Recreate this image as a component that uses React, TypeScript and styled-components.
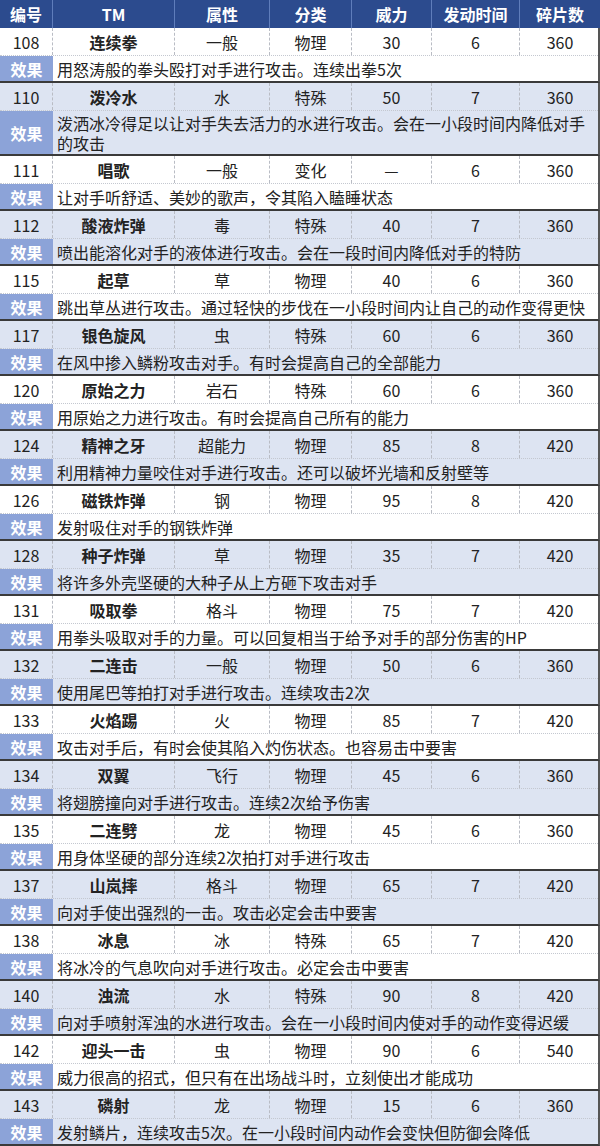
import React from "react"
import styled, { createGlobalStyle } from "styled-components";

const GlobalStyle = createGlobalStyle`
    html, body {
        margin: 0;
        padding: 0;
        background: #fff;
    }
    * {
        box-sizing: border-box;
    }
`

const FONT = `"Noto Sans CJK SC", "Noto Sans", sans-serif`
const COLUMNS = "53px 122px 95px 82px 80px 88px 80px"

const Table = styled.div`
    width: 600px;
    font-family: ${FONT};
    color: #1e1e1e;
`

const HeaderRow = styled.div`
    display: grid;
    grid-template-columns: ${COLUMNS};
    height: 28px;
    background: #2c4b8e;
`

const HeaderCell = styled.div`
    display: flex;
    align-items: center;
    justify-content: center;
    color: #fff;
    font-weight: 700;
    font-size: 16px;
    border-right: 1px solid #5f7dbb;
    &:last-child {
        border-right: none;
    }
`

const Group = styled.div<{ $shade: boolean }>`
    background: ${p => p.$shade ? "#dde4f2" : "#fff"};
    border-bottom: 2px solid #3a3a3a;
    border-right: 2px solid #555;
`

const MainRow = styled.div`
    display: grid;
    grid-template-columns: ${COLUMNS};
    height: 28px;
    border-bottom: 1px dotted #c4c8d0;
`

const Cell = styled.div<{ $bold?: boolean }>`
    display: flex;
    align-items: center;
    justify-content: center;
    font-size: 16px;
    font-weight: ${p => p.$bold ? 700 : 400};
    color: #222;
    border-right: 1px dashed #b9bcc4;
    &:last-child {
        border-right: none;
    }
`

const EffectRow = styled.div<{ $tall?: boolean }>`
    display: grid;
    grid-template-columns: 53px 1fr;
    height: ${p => p.$tall ? "43px" : "25px"};
`

const EffectLabel = styled.div`
    display: flex;
    align-items: center;
    justify-content: center;
    background: #8ca3d8;
    color: #fff;
    font-weight: 700;
    font-size: 16px;
`

const EffectText = styled.div`
    display: flex;
    align-items: center;
    padding: 0 4px 0 4px;
    font-size: 16px;
    line-height: 20px;
    color: #222;
`

interface Move {
    id: string
    name: string
    type: string
    kind: string
    power: string
    time: string
    pieces: string
    effect: string
    tall?: boolean
}

const moves: Move[] = [
    { id: "108", name: "连续拳", type: "一般", kind: "物理", power: "30", time: "6", pieces: "360", effect: "用怒涛般的拳头殴打对手进行攻击。连续出拳5次" },
    { id: "110", name: "泼冷水", type: "水", kind: "特殊", power: "50", time: "7", pieces: "360", effect: "泼洒冰冷得足以让对手失去活力的水进行攻击。会在一小段时间内降低对手的攻击", tall: true },
    { id: "111", name: "唱歌", type: "一般", kind: "变化", power: "—", time: "6", pieces: "360", effect: "让对手听舒适、美妙的歌声，令其陷入瞌睡状态" },
    { id: "112", name: "酸液炸弹", type: "毒", kind: "特殊", power: "40", time: "7", pieces: "360", effect: "喷出能溶化对手的液体进行攻击。会在一段时间内降低对手的特防" },
    { id: "115", name: "起草", type: "草", kind: "物理", power: "40", time: "6", pieces: "360", effect: "跳出草丛进行攻击。通过轻快的步伐在一小段时间内让自己的动作变得更快" },
    { id: "117", name: "银色旋风", type: "虫", kind: "特殊", power: "60", time: "6", pieces: "360", effect: "在风中掺入鳞粉攻击对手。有时会提高自己的全部能力" },
    { id: "120", name: "原始之力", type: "岩石", kind: "特殊", power: "60", time: "6", pieces: "360", effect: "用原始之力进行攻击。有时会提高自己所有的能力" },
    { id: "124", name: "精神之牙", type: "超能力", kind: "物理", power: "85", time: "8", pieces: "420", effect: "利用精神力量咬住对手进行攻击。还可以破坏光墙和反射壁等" },
    { id: "126", name: "磁铁炸弹", type: "钢", kind: "物理", power: "95", time: "8", pieces: "420", effect: "发射吸住对手的钢铁炸弹" },
    { id: "128", name: "种子炸弹", type: "草", kind: "物理", power: "35", time: "7", pieces: "420", effect: "将许多外壳坚硬的大种子从上方砸下攻击对手" },
    { id: "131", name: "吸取拳", type: "格斗", kind: "物理", power: "75", time: "7", pieces: "420", effect: "用拳头吸取对手的力量。可以回复相当于给予对手的部分伤害的HP" },
    { id: "132", name: "二连击", type: "一般", kind: "物理", power: "50", time: "6", pieces: "360", effect: "使用尾巴等拍打对手进行攻击。连续攻击2次" },
    { id: "133", name: "火焰踢", type: "火", kind: "物理", power: "85", time: "7", pieces: "420", effect: "攻击对手后，有时会使其陷入灼伤状态。也容易击中要害" },
    { id: "134", name: "双翼", type: "飞行", kind: "物理", power: "45", time: "6", pieces: "360", effect: "将翅膀撞向对手进行攻击。连续2次给予伤害" },
    { id: "135", name: "二连劈", type: "龙", kind: "物理", power: "45", time: "6", pieces: "360", effect: "用身体坚硬的部分连续2次拍打对手进行攻击" },
    { id: "137", name: "山岚摔", type: "格斗", kind: "物理", power: "65", time: "7", pieces: "420", effect: "向对手使出强烈的一击。攻击必定会击中要害" },
    { id: "138", name: "冰息", type: "冰", kind: "特殊", power: "65", time: "7", pieces: "420", effect: "将冰冷的气息吹向对手进行攻击。必定会击中要害" },
    { id: "140", name: "浊流", type: "水", kind: "特殊", power: "90", time: "8", pieces: "420", effect: "向对手喷射浑浊的水进行攻击。会在一小段时间内使对手的动作变得迟缓" },
    { id: "142", name: "迎头一击", type: "虫", kind: "物理", power: "90", time: "6", pieces: "540", effect: "威力很高的招式，但只有在出场战斗时，立刻使出才能成功" },
    { id: "143", name: "磷射", type: "龙", kind: "物理", power: "15", time: "6", pieces: "360", effect: "发射鳞片，连续攻击5次。在一小段时间内动作会变快但防御会降低" },
]

const headers = ["编号", "TM", "属性", "分类", "威力", "发动时间", "碎片数"]

export default function App() {
    return (
        <>
            <GlobalStyle />
            <Table>
                <HeaderRow>
                    {headers.map(h => <HeaderCell key={h}>{h}</HeaderCell>)}
                </HeaderRow>
                {moves.map((m, i) => (
                    <Group key={m.id} $shade={i % 2 === 1}>
                        <MainRow>
                            <Cell>{m.id}</Cell>
                            <Cell $bold>{m.name}</Cell>
                            <Cell>{m.type}</Cell>
                            <Cell>{m.kind}</Cell>
                            <Cell>{m.power}</Cell>
                            <Cell>{m.time}</Cell>
                            <Cell>{m.pieces}</Cell>
                        </MainRow>
                        <EffectRow $tall={m.tall}>
                            <EffectLabel>效果</EffectLabel>
                            <EffectText>{m.effect}</EffectText>
                        </EffectRow>
                    </Group>
                ))}
            </Table>
        </>
    )
}
